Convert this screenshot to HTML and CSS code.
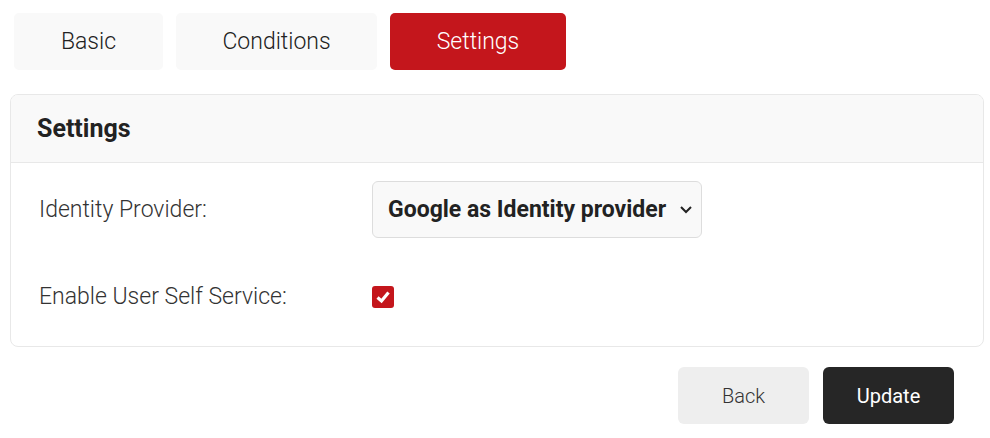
FILE: index.html
```html
<!DOCTYPE html>
<html>
<head>
<meta charset="utf-8">
<link rel="stylesheet" href="styles.css">
</head>
<body>
<div class="page">
  <nav class="tabs">
    <button class="tab tab-basic">Basic</button>
    <button class="tab tab-cond">Conditions</button>
    <button class="tab tab-set active">Settings</button>
  </nav>
  <section class="card">
    <header class="card-head">Settings</header>
    <div class="card-body">
      <div class="row">
        <label class="label">Identity Provider:</label>
        <div class="select">
          <span>Google as Identity provider</span>
          <svg class="chev" width="14" height="9" viewBox="0 0 14 9"><path d="M2 2 L7 7 L12 2" fill="none" stroke="#222" stroke-width="2"/></svg>
        </div>
      </div>
      <div class="row row2">
        <label class="label">Enable User Self Service:</label>
        <span class="check"><svg width="16" height="14" viewBox="0 0 16 14"><path d="M2.5 7.5 L6.5 11 L13.5 2.5" fill="none" stroke="#fff" stroke-width="3.2"/></svg></span>
      </div>
    </div>
  </section>
  <div class="actions">
    <button class="btn btn-back">Back</button>
    <button class="btn btn-update">Update</button>
  </div>
</div>
</body>
</html>
```
FILE: styles.css
```css
html, body { margin: 0; padding: 0; background: #fff; }
body { font-family: Roboto, "Noto Sans", sans-serif; color: #222; }
.page { padding: 13px 6px 0 10px; }
.tabs { display: flex; gap: 13px; padding-left: 4px; }
.tab {
  height: 57px; border: none; border-radius: 5px; background: #f9f9f9;
  font-family: Roboto, sans-serif; font-weight: 300; font-size: 23px; color: #222;
  padding: 0; cursor: pointer;
}
.tab-basic { width: 149px; }
.tab-cond { width: 201px; }
.tab-set { width: 176px; }
.tab.active { background: #c4161c; color: #fff; }
.card {
  margin-top: 24px; border: 1px solid #e8e8e8; border-radius: 8px; overflow: hidden;
}
.card-head {
  height: 68px; box-sizing: border-box; background: #f9f9f9; border-bottom: 1px solid #e8e8e8;
  padding-left: 26px; display: flex; align-items: center;
  font-weight: 700; font-size: 25px; color: #222;
}
.card-body { padding: 18px 0 36px 28px; }
.row { display: flex; align-items: center; }
.row2 { margin-top: 45px; }
.label { width: 333px; font-weight: 300; font-size: 23px; color: #333; }
.select {
  width: 330px; height: 57px; box-sizing: border-box; border: 1px solid #ddd; border-radius: 6px;
  background: #f9f9f9; display: flex; align-items: center; padding-left: 15px;
  font-weight: 700; font-size: 23px; color: #222;
}
.chev { margin-left: 13px; }
.check {
  width: 22px; height: 22px; border-radius: 3px; background: #c4161c;
  display: flex; align-items: center; justify-content: center;
}
.actions { display: flex; justify-content: flex-end; gap: 14px; margin-top: 20px; padding-right: 30px; }
.btn {
  width: 131px; height: 57px; border: none; border-radius: 6px;
  font-family: Roboto, sans-serif; font-weight: 300; font-size: 20px;
}
.btn-back { background: #eee; color: #333; }
.btn-update { background: #262626; color: #fff; font-weight: 400; }
```
